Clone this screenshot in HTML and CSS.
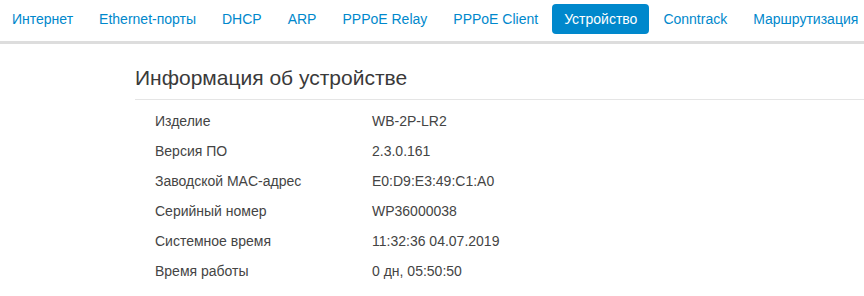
FILE: index.html
```html
<!DOCTYPE html>
<html lang="ru">
<head>
<meta charset="utf-8">
<link rel="stylesheet" href="styles.css">
</head>
<body>
<nav class="tabs">
  <a class="tab" href="#">Интернет</a>
  <a class="tab" href="#">Ethernet-порты</a>
  <a class="tab" href="#">DHCP</a>
  <a class="tab" href="#">ARP</a>
  <a class="tab" href="#">PPPoE Relay</a>
  <a class="tab" href="#">PPPoE Client</a>
  <a class="tab active" href="#">Устройство</a>
  <a class="tab" href="#">Conntrack</a>
  <a class="tab" href="#">Маршрутизация</a>
</nav>
<main class="content">
  <h2 class="title">Информация об устройстве</h2>
  <div class="info">
    <div class="row"><span class="label">Изделие</span><span class="value">WB-2P-LR2</span></div>
    <div class="row"><span class="label">Версия ПО</span><span class="value">2.3.0.161</span></div>
    <div class="row"><span class="label">Заводской MAC-адрес</span><span class="value">E0:D9:E3:49:C1:A0</span></div>
    <div class="row"><span class="label">Серийный номер</span><span class="value">WP36000038</span></div>
    <div class="row"><span class="label">Системное время</span><span class="value">11:32:36 04.07.2019</span></div>
    <div class="row"><span class="label">Время работы</span><span class="value">0 дн, 05:50:50</span></div>
  </div>
</main>
</body>
</html>
```
FILE: styles.css
```css
html, body {
  margin: 0;
  padding: 0;
  background: #fff;
  font-family: "Liberation Sans", Arial, sans-serif;
  font-size: 14px;
  color: #333;
  overflow: hidden;
}
.tabs {
  display: flex;
  flex-wrap: nowrap;
  white-space: nowrap;
  padding: 4px 0 7px 0;
  border-bottom: 3px solid #dddddd;
}
.tab {
  display: block;
  padding: 5px 12px;
  margin-right: 2px;
  line-height: 20px;
  color: #0088cc;
  text-decoration: none;
  border-radius: 4px;
}
.tab.active {
  background: #0088cc;
  color: #fff;
}
.content {
  margin-left: 135px;
}
.title {
  margin: 23px 0 0 0;
  padding-bottom: 10px;
  font-size: 21px;
  line-height: 22px;
  font-weight: normal;
  color: #3a3a3a;
  border-bottom: 1px solid #e5e5e5;
}
.info {
  margin-top: 6px;
  padding-left: 20px;
}
.row {
  display: flex;
  line-height: 30px;
  color: #444;
}
.label {
  width: 217px;
  flex: none;
}
```
